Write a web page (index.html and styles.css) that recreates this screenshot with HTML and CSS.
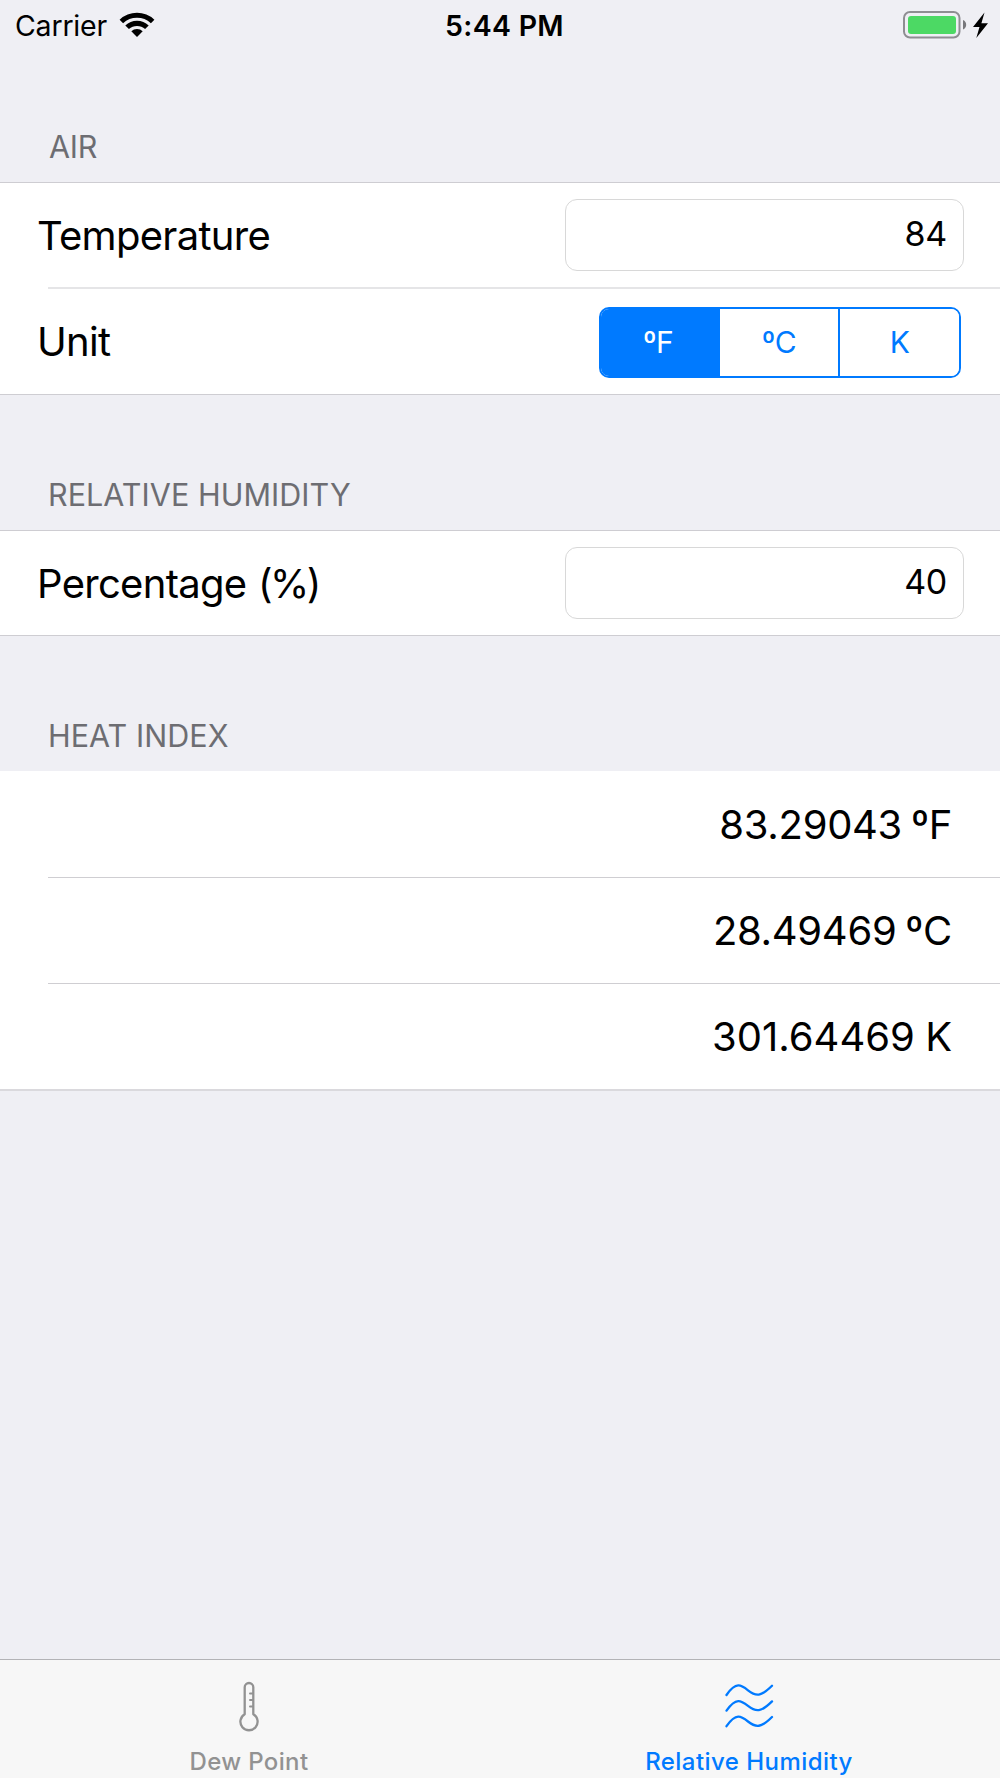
FILE: index.html
```
<!DOCTYPE html>
<html lang="en">
<head>
    <meta charset="UTF-8">
    <meta name="viewport" content="width=device-width, initial-scale=1.0">
    <title>Relative Humidity</title>
    <link rel="stylesheet" href="styles.css">
</head>
<body>
    <header class="status-bar">
        <div class="carrier">
            <span>Carrier</span>
            <svg class="wifi" width="36" height="26" viewBox="0 0 36 26">
                <path d="M0.600 7.700 A25.500 25.500 0 0 1 35.400 7.700 L31.900 11.200 A20.500 20.500 0 0 0 4.100 11.200 Z"/>
                <path d="M6.300 13.500 A17 17 0 0 1 29.700 13.500 L26.100 17.100 A12 12 0 0 0 9.900 17.100 Z"/>
                <path d="M12.300 19.300 A8.200 8.200 0 0 1 23.700 19.300 L18 25 Z"/>
            </svg>
        </div>
        <div class="clock">5:44 PM</div>
        <div class="power">
            <svg width="88" height="30" viewBox="0 0 88 30">
                <rect x="1" y="2" width="55.500" height="25.500" rx="6" fill="none" stroke="#8e8e92" stroke-width="2"/>
                <rect x="5" y="6" width="48" height="18" rx="3" fill="#4cd964"/>
                <path d="M60 10 Q63.200 11.500 63.200 14.700 Q63.200 18 60 19.500 Z" fill="#77777b"/>
                <path d="M81.500 2.500 L70 17 L76.500 17 L73.300 28 L85 13.200 L78.400 13.200 Z" fill="#000"/>
            </svg>
        </div>
    </header>

    <main>
        <h2 class="title air">AIR</h2>
        <section class="group">
            <div class="row">
                <label class="name" for="temp">Temperature</label>
                <input class="field" id="temp" type="text" value="84">
            </div>
            <div class="line thick"></div>
            <div class="row last">
                <span class="name unit">Unit</span>
                <div class="segments">
                    <button class="segment selected">ºF</button>
                    <button class="segment">ºC</button>
                    <button class="segment">K</button>
                </div>
            </div>
        </section>

        <h2 class="title">RELATIVE HUMIDITY</h2>
        <section class="group">
            <div class="row">
                <label class="name" for="humidity">Percentage <span class="percent">(%)</span></label>
                <input class="field" id="humidity" type="text" value="40">
            </div>
        </section>

        <h2 class="title">HEAT INDEX</h2>
        <section class="group results">
            <div class="row result">83.29043 ºF</div>
            <div class="line"></div>
            <div class="row result">28.49469 ºC</div>
            <div class="line"></div>
            <div class="row result kelvin">301.64469 K</div>
        </section>
    </main>

    <nav class="tab-bar">
        <a class="tab">
            <svg width="50" height="54" viewBox="0 0 50 54">
                <path d="M20.700 36.200 V9.300 A4.300 4.300 0 0 1 29.300 9.300 V36.200 A8.600 8.600 0 1 1 20.700 36.200 Z"/>
                <path class="marks" d="M26 15.500 H29 M26 22 H29 M26 28.500 H29"/>
            </svg>
            <span>Dew Point</span>
        </a>
        <a class="tab active">
            <svg width="50" height="54" viewBox="0 0 50 54">
                <path d="M2.500 17 C12 3.300 17 6.800 24 12.300 C32 18.600 37 18.800 48 7.800"/>
                <path d="M2.500 32.600 C12 18.900 17 22.400 24 27.900 C32 34.200 37 34.400 48 23.400"/>
                <path d="M2.500 48.200 C12 34.500 17 38 24 43.500 C32 49.800 37 50 48 39"/>
            </svg>
            <span>Relative Humidity</span>
        </a>
    </nav>
</body>
</html>
```
FILE: styles.css
```
* {
    box-sizing: border-box;
}

body {
    margin: 0;
    height: 1778px;
    display: flex;
    flex-direction: column;
    background-color: #efeff4;
    color: #000;
    font-family: Inter, "Liberation Sans", sans-serif;
}

/* status bar */
.status-bar {
    display: grid;
    grid-template-columns: 1fr auto 1fr;
    align-items: center;
    height: 50px;
    padding: 0 12px 0 15px;
    font-size: 28.5px;
}

.carrier {
    display: flex;
    align-items: center;
    gap: 12px;
    letter-spacing: -0.2px;
}

.wifi {
    margin-top: -1px;
}

.clock {
    font-weight: 600;
    letter-spacing: 0.3px;
    padding-left: 6px;
}

.power {
    display: flex;
    justify-content: flex-end;
}

.power svg {
    margin-right: -3px;
    margin-top: -1px;
}

main {
    flex: 1;
}

/* section titles */
.title {
    display: flex;
    align-items: flex-end;
    height: 135px;
    margin: 0;
    padding: 0 48px 15px;
    color: #6d6d72;
    font-size: 30.5px;
    font-weight: 400;
    line-height: 40px;
    letter-spacing: 0.05px;
}

.title.air {
    height: 132px;
    padding-left: 49px;
    letter-spacing: -0.3px;
}

/* table groups */
.group {
    background-color: #fff;
    border-top: 1px solid #cecdd2;
    border-bottom: 1px solid #cecdd2;
}

.row {
    display: flex;
    align-items: center;
    justify-content: space-between;
    height: 104px;
    padding: 0 36px 0 37px;
    font-size: 40px;
}

.row.last {
    height: 105px;
}

.line {
    height: 1px;
    margin-left: 48px;
    background-color: #cfced2;
}

.line.thick {
    height: 2px;
    background-color: #e5e5e7;
}

.name {
    letter-spacing: -0.7px;
}

.percent {
    margin-left: 1px;
    letter-spacing: -2.5px;
}

.field {
    width: 399px;
    height: 72px;
    padding: 0 16px 3px;
    border: 1px solid #d8d8d8;
    border-radius: 12px;
    background-color: #fff;
    color: #000;
    font-family: inherit;
    font-size: 34px;
    letter-spacing: -0.3px;
    text-align: right;
}

.segments {
    display: grid;
    grid-template-columns: 119px 120px 119px;
    width: 362px;
    height: 71px;
    margin: 1px 3px 0 0;
    border: 2px solid #007aff;
    border-radius: 10px;
    overflow: hidden;
}

.segment {
    padding: 0;
    border: 0;
    border-right: 2px solid #007aff;
    background-color: #fff;
    color: #007aff;
    font-family: inherit;
    font-size: 30px;
    letter-spacing: -0.5px;
}

.segment:last-child {
    border-right: 0;
}

.segment.selected {
    padding-right: 3px;
    background-color: #007aff;
    color: #fff;
}

/* heat index */
.results {
    border-top: 0;
    border-bottom: 2px solid #dad9dd;
}

.results .row {
    height: 105px;
}

.results .row:first-child {
    height: 106px;
}

.row.result {
    justify-content: flex-end;
    padding-right: 48px;
    letter-spacing: -0.3px;
    word-spacing: -2px;
}

.row.kelvin {
    letter-spacing: 0;
    word-spacing: -1px;
}

/* tab bar */
.tab-bar {
    display: grid;
    grid-template-columns: 1fr 1fr;
    height: 119px;
    border-top: 1px solid #b3b3b6;
    background-color: #f7f7f7;
}

.tab {
    display: flex;
    flex-direction: column;
    align-items: center;
    padding: 18px 2px 0 0;
    color: #929292;
    font-size: 24px;
    font-weight: 500;
    letter-spacing: 0.35px;
    line-height: 30px;
}

.tab svg {
    fill: none;
    stroke: currentColor;
    stroke-width: 2.3;
    stroke-linecap: round;
    stroke-linejoin: round;
    margin-bottom: 15px;
}

.tab .marks {
    stroke-width: 2;
}

.tab.active {
    color: #007aff;
    letter-spacing: 0.45px;
}
```
